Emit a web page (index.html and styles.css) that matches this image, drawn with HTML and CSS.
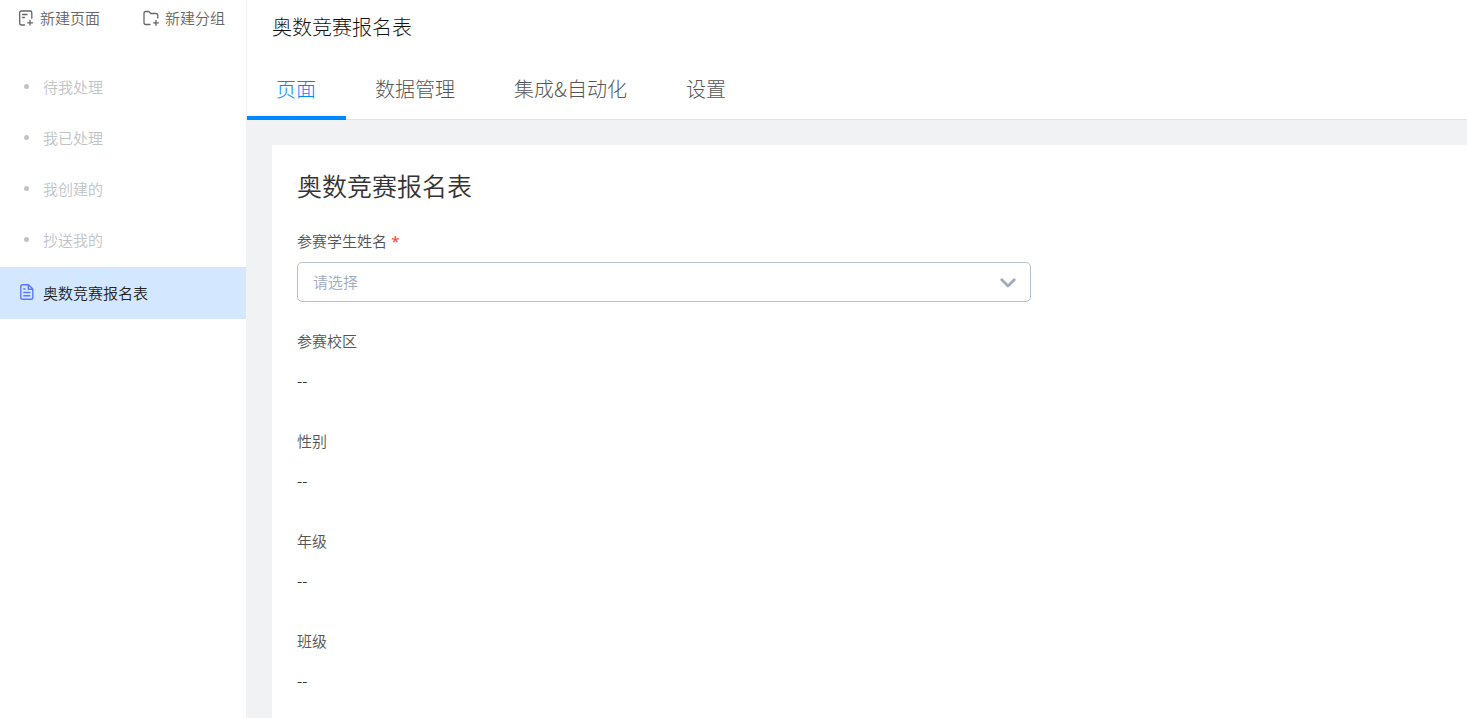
FILE: index.html
```
<!DOCTYPE html>
<html lang="zh-CN">
<head>
<meta charset="UTF-8">
<meta name="viewport" content="width=device-width, initial-scale=1.0">
<title>奥数竞赛报名表</title>
<link rel="stylesheet" href="styles.css">
</head>
<body>
<aside class="sidebar">
  <div class="actions">
    <button type="button" class="action">
      <svg width="16" height="16" viewBox="0 0 16 16" fill="none" stroke="#666" stroke-width="1.3" stroke-linecap="round" stroke-linejoin="round">
        <path d="M6.5 15H3.5Q1.7 15 1.7 13.2V2.8Q1.7 1 3.5 1H12Q13.8 1 13.8 2.8V8.3M4.5 4.5H9M4.5 7.5H6.5M12 10.5V15M9.7 12.8H14.5"/>
      </svg>
      新建页面
    </button>
    <button type="button" class="action">
      <svg width="16" height="16" viewBox="0 0 16 16" fill="none" stroke="#666" stroke-width="1.3" stroke-linecap="round" stroke-linejoin="round">
        <path d="M7 14.5H2.8Q1 14.5 1 12.7V3.3Q1 1.5 2.8 1.5H5.8L7.8 3.5H13Q14.8 3.5 14.8 5.3V8M13 10.5V15.3M10.6 12.9H15.4"/>
      </svg>
      新建分组
    </button>
  </div>
  <nav class="menu">
    <a href="#" class="menu-item"><span class="dot"></span>待我处理</a>
    <a href="#" class="menu-item"><span class="dot"></span>我已处理</a>
    <a href="#" class="menu-item"><span class="dot"></span>我创建的</a>
    <a href="#" class="menu-item"><span class="dot"></span>抄送我的</a>
    <a href="#" class="menu-item active">
      <svg width="14" height="16" viewBox="0 0 14 16" fill="none" stroke="#5b78ff" stroke-width="1.4" stroke-linejoin="round">
        <path d="M2.5 .8H8.5L12.8 5V13.7Q12.8 15.2 11.3 15.2H2.3Q.8 15.2 .8 13.7V2.3Q.8 .8 2.5 .8ZM8.3 1V5.3H12.5M3.3 5H5.5M3.3 8.5H10.3M3.3 11.8H10.3"/>
      </svg>
      奥数竞赛报名表
    </a>
  </nav>
</aside>
<div class="main">
  <header class="header">奥数竞赛报名表</header>
  <nav class="tabs">
    <a href="#" class="tab selected">页面</a>
    <a href="#" class="tab">数据管理</a>
    <a href="#" class="tab">集成&amp;自动化</a>
    <a href="#" class="tab">设置</a>
  </nav>
  <main class="content">
    <form class="card">
      <h1>奥数竞赛报名表</h1>
      <div class="field">
        <label for="student">参赛学生姓名 <span class="required">*</span></label>
        <div class="select-box">
          <select id="student" name="student" required>
            <option value="">请选择</option>
          </select>
          <svg class="arrow" width="16" height="10" viewBox="0 0 16 10" fill="none" stroke="#a0abbf" stroke-width="2.8" stroke-linecap="round" stroke-linejoin="round">
            <path d="M1.8 1.8L8 8L14.2 1.8"/>
          </svg>
        </div>
      </div>
      <div class="field">
        <label for="campus">参赛校区</label>
        <output id="campus">--</output>
      </div>
      <div class="field">
        <label for="gender">性别</label>
        <output id="gender">--</output>
      </div>
      <div class="field">
        <label for="grade">年级</label>
        <output id="grade">--</output>
      </div>
      <div class="field">
        <label for="class">班级</label>
        <output id="class">--</output>
      </div>
    </form>
  </main>
</div>
</body>
</html>
```
FILE: styles.css
```
* {
  box-sizing: border-box;
}
body {
  display: flex;
  height: 100vh;
  margin: 0;
  overflow: hidden;
  font-family: "Noto Sans CJK SC", sans-serif;
  font-size: 15px;
  font-weight: 350;
  color: #333;
  background-color: #fff;
}
a {
  color: inherit;
  text-decoration: none;
}
button, select {
  font: inherit;
}

/* left side */
.sidebar {
  flex: none;
  width: 247px;
  border-right: 1px solid #f1f2f4;
}
.actions {
  display: flex;
  justify-content: space-between;
  height: 62px;
  padding: 6px 21px 0 18px;
}
.action {
  display: flex;
  align-items: center;
  gap: 6px;
  height: 24px;
  padding: 0 0 1px;
  border: 0;
  background: none;
  color: #666;
}
.menu-item {
  display: flex;
  align-items: center;
  gap: 9px;
  height: 51px;
  padding: 0 20px 2px;
  color: #c0c4c8;
}
.menu-item.active {
  height: 52px;
  margin-top: 1px;
  background-color: #d3e7ff;
  color: #222;
}
.dot {
  width: 5px;
  height: 5px;
  margin: 0 5px 0 4px;
  border-radius: 50%;
  background-color: #c0c4c8;
}

/* right side */
.main {
  flex: 1;
  display: flex;
  flex-direction: column;
  min-width: 0;
}
.header {
  flex: none;
  height: 60px;
  padding: 12px 25px;
  font-size: 20px;
  font-weight: 300;
  line-height: 30px;
  color: #111;
}
.tabs {
  flex: none;
  display: flex;
  height: 60px;
  border-bottom: 1px solid #e0e3e6;
  font-size: 20px;
  font-weight: 300;
  line-height: 58px;
  color: #555;
}
.tab {
  height: 60px;
  padding: 0 30px 0 29px;
}
.tab.selected {
  border-bottom: 4px solid #0089ff;
  color: #0089ff;
}
.content {
  flex: 1;
  min-height: 0;
  padding: 25px 0 0 25px;
  background-color: #f1f2f4;
}
.card {
  height: 100%;
  padding: 22px 25px;
  overflow: hidden;
  background-color: #fff;
}
h1 {
  margin: 0 0 26px;
  font-size: 25px;
  font-weight: 350;
  line-height: 36px;
}
.field {
  max-width: 734px;
  margin-bottom: 27px;
}
label {
  display: block;
  margin-bottom: 9px;
  line-height: 24px;
  color: #555;
}
.required {
  margin-left: 1px;
  font-family: "Noto Sans", sans-serif;
  font-weight: 400;
  line-height: 1;
  color: #f0443c;
}
output {
  display: block;
  height: 40px;
  line-height: 38px;
}
.select-box {
  position: relative;
}
select {
  display: block;
  width: 100%;
  height: 40px;
  padding: 0 15px 2px;
  border: 1px solid #b8c0cc;
  border-radius: 5px;
  background-color: #fff;
  color: #a0abbf;
  appearance: none;
}
.arrow {
  position: absolute;
  top: 16px;
  right: 15px;
  pointer-events: none;
}
```
